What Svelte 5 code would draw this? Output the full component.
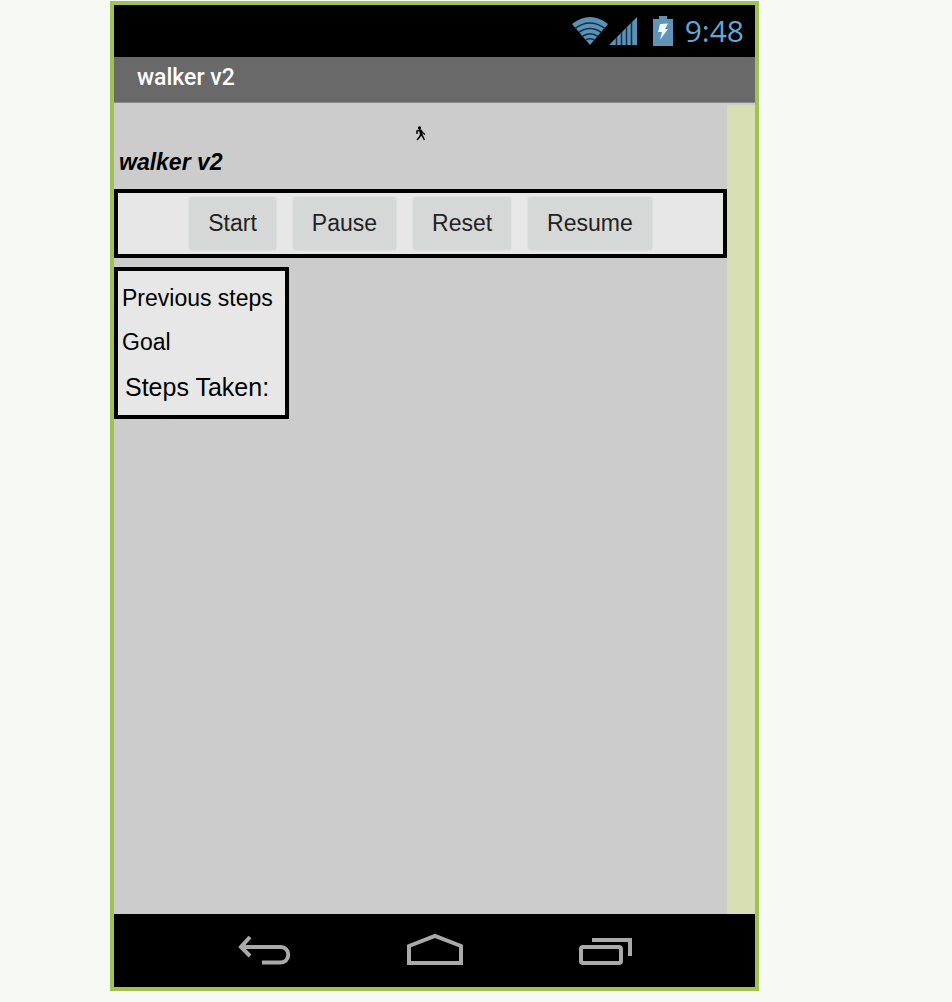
<script>
  const actions = ['Start', 'Pause', 'Reset', 'Resume'];
</script>

<div class="page">
  <main class="phone">
    <div class="status">
      <svg class="wifi" width="38" height="30" viewBox="0 0 38 30" aria-label="Wi-Fi">
        <path d="M1 8Q19-6 37 8L19 29Z" fill="#5a92b8" />
        <g fill="none" stroke="#16303f" stroke-width="1.6">
          <path d="M4 12.5Q19 1.500 34 12.500" />
          <path d="M7.500 16.500Q19 8.500 30.500 16.500" />
          <path d="M11 20.500Q19 15 27 20.500" />
          <path d="M14.500 24Q19 21.500 23.500 24" />
        </g>
      </svg>
      <svg class="signal" width="30" height="30" viewBox="0 0 30 30" aria-label="Signal">
        <path d="M0 29L28 1V29Z" fill="#5a92b8" />
        <path d="M7.500 21V29M12.500 16V29M17.500 11V29M22.500 6V29" stroke="#16303f" stroke-width="1.500" />
      </svg>
      <svg class="battery" width="20" height="30" viewBox="0 0 20 30" aria-label="Charging">
        <path d="M0 3H6V0H14V3H20V30H0Z" fill="#5f93b8" />
        <path d="M7 8L15 7.500L12 13H15L7 24L9 16H5Z" fill="#f0f6fa" />
      </svg>
      <span class="clock">9:48</span>
    </div>
    <header>walker v2</header>
    <div class="screen">
      <div class="content">
        <svg class="walker" width="12" height="15" viewBox="0 0 12 15" aria-label="Walker">
          <circle cx="4.500" cy="1.800" r="1.600" fill="#000" />
          <path d="M5 4L6.500 9M5 4L2 5V8M6 4.500L8 7L10 8.500M6 8.500L4.500 11L2 14M6.500 8.500L8 11L9.500 14" fill="none" stroke="#000" stroke-width="1.500" />
          <path d="M4 3.500H6.500L7.500 9H5Z" fill="#000" />
        </svg>
        <h1>walker v2</h1>
        <div class="actions">
          {#each actions as action}
            <button type="button">{action}</button>
          {/each}
        </div>
        <div class="stats">
          <p>Previous steps</p>
          <p>Goal</p>
          <p class="taken">Steps Taken:</p>
        </div>
      </div>
      <div class="gutter"></div>
    </div>
    <nav>
      <button type="button" aria-label="Back">
        <svg width="56" height="36" viewBox="0 0 56 36">
          <path d="M13 4L4 14L13 23M5 14H43C54 14 54 29.500 43 29.500H25" />
        </svg>
      </button>
      <button type="button" aria-label="Home">
        <svg width="58" height="36" viewBox="0 0 58 36">
          <path d="M3 13L29 3L55 13V30H3Z" />
        </svg>
      </button>
      <button type="button" aria-label="Recent apps">
        <svg width="56" height="36" viewBox="0 0 56 36">
          <rect x="4" y="14" width="40" height="16" rx="2" />
          <path d="M15 7H53V23" />
        </svg>
      </button>
    </nav>
  </main>
</div>

<style>
  :global(body) {
    margin: 0;
    background: #f7f9f4;
  }
  .page {
    box-sizing: border-box;
    min-height: 100vh;
    padding: 1px 193px 11px 110px;
    display: flex;
    font-family: "Liberation Sans", Arial, sans-serif;
    font-size: 23px;
    color: #000;
  }
  .phone {
    flex: 1;
    display: flex;
    flex-direction: column;
    border: 4px solid #a3c052;
  }
  svg {
    display: block;
  }
  .status {
    display: flex;
    align-items: center;
    justify-content: flex-end;
    height: 52px;
    padding-right: 11px;
    background: #000;
  }
  .signal {
    margin-right: 14px;
  }
  .battery {
    margin-right: 12px;
  }
  .clock {
    font: 30px/52px "Open Sans", "Noto Sans", sans-serif;
    color: #66a6d2;
  }
  header {
    box-sizing: border-box;
    height: 46px;
    padding-left: 23px;
    background: #696969;
    border-bottom: 1px solid #888;
    color: #fff;
    font: 500 23px/42px Roboto, sans-serif;
  }
  .screen {
    flex: 1;
    display: flex;
    background: #ccc;
  }
  .content {
    flex: 1;
  }
  .gutter {
    width: 28px;
    margin-top: 2px;
    background: #d7deb1;
  }
  .walker {
    margin: 23px auto 0;
  }
  h1 {
    margin: 8px 0 13px;
    padding-left: 5px;
    font-size: 23px;
    line-height: 27px;
    font-style: italic;
  }
  .actions {
    display: flex;
    justify-content: center;
    gap: 17px;
    padding: 4px;
    border: 4px solid #000;
    background: #e7e7e7;
  }
  .actions button {
    height: 53px;
    padding: 0 19px;
    border: 0;
    border-radius: 3px;
    background: #d6d8d7;
    box-shadow: 0 0 2px #cfd1d0;
    color: #222;
    font: inherit;
  }
  .stats {
    box-sizing: border-box;
    width: fit-content;
    margin-top: 9px;
    padding: 5px 12px 5px 4px;
    border: 4px solid #000;
    background: #e7e7e7;
  }
  .stats p {
    margin: 0;
    line-height: 44px;
  }
  .stats .taken {
    padding-left: 3px;
    font-size: 25px;
    line-height: 46px;
  }
  nav {
    display: flex;
    justify-content: center;
    gap: 113px;
    height: 73px;
    background: #000;
  }
  nav button {
    padding: 0;
    border: 0;
    background: none;
  }
  nav path,
  nav rect {
    fill: none;
    stroke: #aaa;
    stroke-width: 4;
  }
</style>
